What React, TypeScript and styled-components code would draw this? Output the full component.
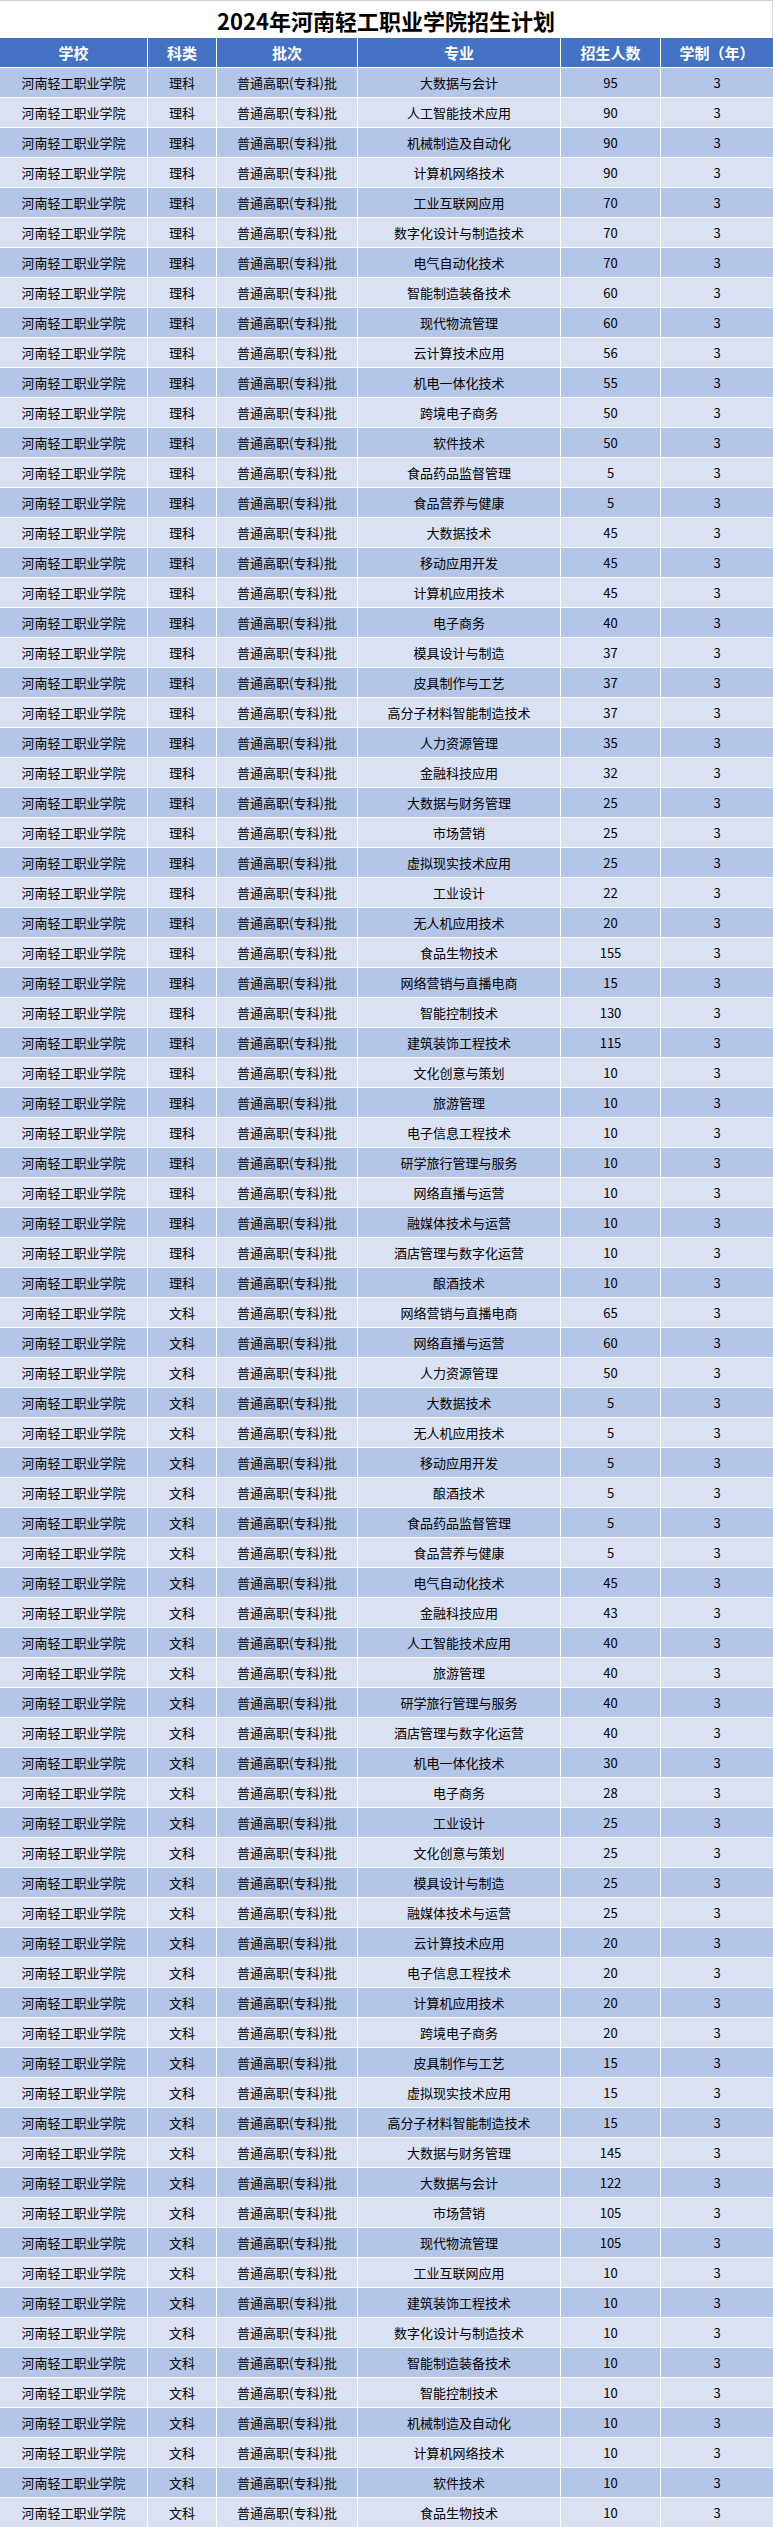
import styled, { createGlobalStyle } from 'styled-components';

const GlobalStyle = createGlobalStyle`
  html, body {
    margin: 0;
    padding: 0;
    background: #ffffff;
  }
  body {
    font-family: "Noto Sans CJK SC", "Noto Sans", sans-serif;
    color: #000000;
  }
`;

const COLUMNS = '147px 68px 140px 202px 99px 1fr';

type Major = [string, number];

const liKe: Major[] = [
  ['大数据与会计', 95],
  ['人工智能技术应用', 90],
  ['机械制造及自动化', 90],
  ['计算机网络技术', 90],
  ['工业互联网应用', 70],
  ['数字化设计与制造技术', 70],
  ['电气自动化技术', 70],
  ['智能制造装备技术', 60],
  ['现代物流管理', 60],
  ['云计算技术应用', 56],
  ['机电一体化技术', 55],
  ['跨境电子商务', 50],
  ['软件技术', 50],
  ['食品药品监督管理', 5],
  ['食品营养与健康', 5],
  ['大数据技术', 45],
  ['移动应用开发', 45],
  ['计算机应用技术', 45],
  ['电子商务', 40],
  ['模具设计与制造', 37],
  ['皮具制作与工艺', 37],
  ['高分子材料智能制造技术', 37],
  ['人力资源管理', 35],
  ['金融科技应用', 32],
  ['大数据与财务管理', 25],
  ['市场营销', 25],
  ['虚拟现实技术应用', 25],
  ['工业设计', 22],
  ['无人机应用技术', 20],
  ['食品生物技术', 155],
  ['网络营销与直播电商', 15],
  ['智能控制技术', 130],
  ['建筑装饰工程技术', 115],
  ['文化创意与策划', 10],
  ['旅游管理', 10],
  ['电子信息工程技术', 10],
  ['研学旅行管理与服务', 10],
  ['网络直播与运营', 10],
  ['融媒体技术与运营', 10],
  ['酒店管理与数字化运营', 10],
  ['酿酒技术', 10],
];

const wenKe: Major[] = [
  ['网络营销与直播电商', 65],
  ['网络直播与运营', 60],
  ['人力资源管理', 50],
  ['大数据技术', 5],
  ['无人机应用技术', 5],
  ['移动应用开发', 5],
  ['酿酒技术', 5],
  ['食品药品监督管理', 5],
  ['食品营养与健康', 5],
  ['电气自动化技术', 45],
  ['金融科技应用', 43],
  ['人工智能技术应用', 40],
  ['旅游管理', 40],
  ['研学旅行管理与服务', 40],
  ['酒店管理与数字化运营', 40],
  ['机电一体化技术', 30],
  ['电子商务', 28],
  ['工业设计', 25],
  ['文化创意与策划', 25],
  ['模具设计与制造', 25],
  ['融媒体技术与运营', 25],
  ['云计算技术应用', 20],
  ['电子信息工程技术', 20],
  ['计算机应用技术', 20],
  ['跨境电子商务', 20],
  ['皮具制作与工艺', 15],
  ['虚拟现实技术应用', 15],
  ['高分子材料智能制造技术', 15],
  ['大数据与财务管理', 145],
  ['大数据与会计', 122],
  ['市场营销', 105],
  ['现代物流管理', 105],
  ['工业互联网应用', 10],
  ['建筑装饰工程技术', 10],
  ['数字化设计与制造技术', 10],
  ['智能制造装备技术', 10],
  ['智能控制技术', 10],
  ['机械制造及自动化', 10],
  ['计算机网络技术', 10],
  ['软件技术', 10],
  ['食品生物技术', 10],
];

const rows = [
  ...liKe.map(([major, count]) => ({ subject: '理科', major, count })),
  ...wenKe.map(([major, count]) => ({ subject: '文科', major, count })),
];

const headers = ['学校', '科类', '批次', '专业', '招生人数', '学制（年）'];

const Page = styled.div`
  width: 773px;
`;

const Title = styled.h1`
  margin: 0;
  height: 38px;
  box-sizing: border-box;
  border-top: 1px solid #d4d4d4;
  border-right: 1px solid #d4d4d4;
  display: flex;
  align-items: center;
  justify-content: center;
  font-size: 22px;
  font-weight: 700;
  color: #000000;
`;

const Row = styled.div`
  display: grid;
  grid-template-columns: ${COLUMNS};
  column-gap: 1px;
  height: 29px;
  margin-bottom: 1px;
  background: #ffffff;
`;

const HeadCell = styled.div`
  display: flex;
  align-items: center;
  justify-content: center;
  background: #4472c4;
  color: #ffffff;
  font-size: 15px;
  font-weight: 700;
`;

const Cell = styled.div<{ $dark: boolean }>`
  display: flex;
  align-items: center;
  justify-content: center;
  background: ${(p) => (p.$dark ? '#b4c6e7' : '#d9e1f2')};
  color: #000000;
  font-size: 13px;
  white-space: nowrap;
`;

export default function App() {
  return (
    <Page>
      <GlobalStyle />
      <Title>2024年河南轻工职业学院招生计划</Title>
      <Row>
        {headers.map((h) => (
          <HeadCell key={h}>{h}</HeadCell>
        ))}
      </Row>
      {rows.map((r, i) => {
        const dark = i % 2 === 0;
        return (
          <Row key={i}>
            <Cell $dark={dark}>河南轻工职业学院</Cell>
            <Cell $dark={dark}>{r.subject}</Cell>
            <Cell $dark={dark}>普通高职(专科)批</Cell>
            <Cell $dark={dark}>{r.major}</Cell>
            <Cell $dark={dark}>{r.count}</Cell>
            <Cell $dark={dark}>3</Cell>
          </Row>
        );
      })}
    </Page>
  );
}
